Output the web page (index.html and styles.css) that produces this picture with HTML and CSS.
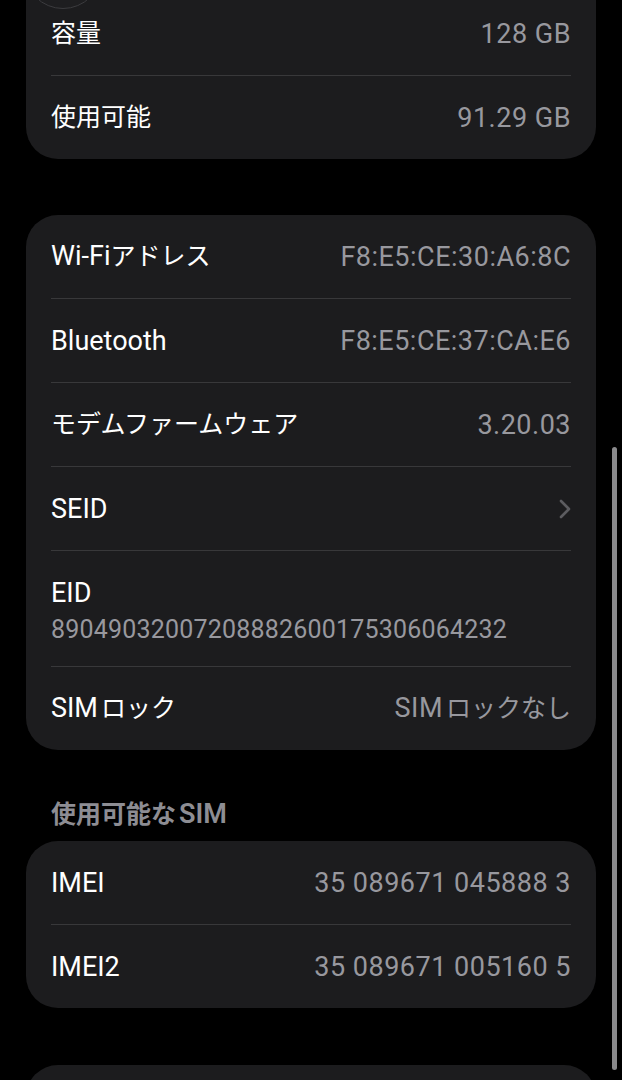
FILE: index.html
```html
<!DOCTYPE html>
<html lang="ja">
<head>
    <meta charset="UTF-8">
    <meta name="viewport" content="width=device-width, initial-scale=1.0">
    <title>情報</title>
    <link rel="stylesheet" href="styles.css">
</head>
<body>
    <div class="back-button"></div>
    <div class="scroll-indicator"></div>

    <main class="list">
        <section class="card card-cut">
            <div class="row">
                <span class="label"><span class="jp">容量</span></span>
                <span class="value">128 GB</span>
            </div>
            <div class="row">
                <span class="label"><span class="jp">使用可能</span></span>
                <span class="value">91.29 GB</span>
            </div>
        </section>

        <section class="card card-gap">
            <div class="row">
                <span class="label">Wi-Fi<span class="jp">アドレス</span></span>
                <span class="value">F8:E5:CE:30:A6:8C</span>
            </div>
            <div class="row">
                <span class="label">Bluetooth</span>
                <span class="value">F8:E5:CE:37:CA:E6</span>
            </div>
            <div class="row">
                <span class="label"><span class="jp">モデムファームウェア</span></span>
                <span class="value">3.20.03</span>
            </div>
            <div class="row">
                <span class="label">SEID</span>
                <svg class="chevron" width="14" height="22" viewBox="0 0 14 22">
                    <polyline points="3,3 11,11 3,19" fill="none" stroke="#5c5c60" stroke-width="2.6" stroke-linecap="round" stroke-linejoin="round"/>
                </svg>
            </div>
            <div class="row row-stack">
                <span class="label">EID</span>
                <span class="value value-small">89049032007208882600175306064232</span>
            </div>
            <div class="row">
                <span class="label">SIM<span class="jp jp-after">ロック</span></span>
                <span class="value">SIM<span class="jp jp-after">ロックなし</span></span>
            </div>
        </section>

        <h2 class="section-title"><span class="jp">使用可能な</span>SIM</h2>

        <section class="card">
            <div class="row">
                <span class="label">IMEI</span>
                <span class="value">35 089671 045888 3</span>
            </div>
            <div class="row">
                <span class="label">IMEI2</span>
                <span class="value">35 089671 005160 5</span>
            </div>
        </section>

        <section class="card card-gap card-next"></section>
    </main>
</body>
</html>
```

FILE: styles.css
```css
html, body {
    overflow: hidden;
}
body {
    margin: 0;
    background-color: #000;
    color: #fff;
    font-family: Roboto, "Noto Sans CJK JP", sans-serif;
    font-size: 27px;
    position: relative;
    height: 1080px;
}
.list {
    padding: 0 26px;
}
.card {
    background-color: #1c1c1e;
    border-radius: 32px;
    padding: 0 25px;
}
.card-cut {
    margin-top: -8px;
    border-top-left-radius: 0;
    border-top-right-radius: 0;
}
.card-gap {
    margin-top: 56px;
}
.card-next {
    margin-top: 57px;
    height: 120px;
}
.row {
    height: 83px;
    display: flex;
    align-items: center;
    justify-content: space-between;
}
.row + .row {
    border-top: 1px solid #38383a;
}
.row-stack {
    height: auto;
    padding: 26px 0 21px;
    flex-direction: column;
    align-items: flex-start;
    justify-content: flex-start;
    gap: 6px;
}
.label {
    line-height: 32px;
}
.value {
    color: #98989e;
    line-height: 32px;
    letter-spacing: 0.5px;
}
.value-small {
    font-size: 25px;
    line-height: 30px;
    letter-spacing: 0.2px;
}
.jp {
    font-size: 25px;
    letter-spacing: 0;
}
.jp-after {
    margin-left: 3px;
}
.chevron {
    margin-right: -1px;
}
.section-title {
    margin: 48px 0 10px;
    padding-left: 25px;
    font-size: 27px;
    font-weight: 600;
    line-height: 32px;
    color: #8d8d93;
}
.section-title .jp {
    font-size: 25px;
    margin-right: 3px;
}
.back-button {
    position: absolute;
    left: 24px;
    top: -69px;
    width: 76px;
    height: 76px;
    border-radius: 50%;
    background-color: #1e1e20;
    border: 1.5px solid #3c3c3f;
    z-index: 2;
}
.scroll-indicator {
    position: absolute;
    right: 5px;
    top: 447px;
    width: 5px;
    height: 623px;
    border-radius: 3px;
    background-color: #8a8a8c;
    z-index: 2;
}
```
